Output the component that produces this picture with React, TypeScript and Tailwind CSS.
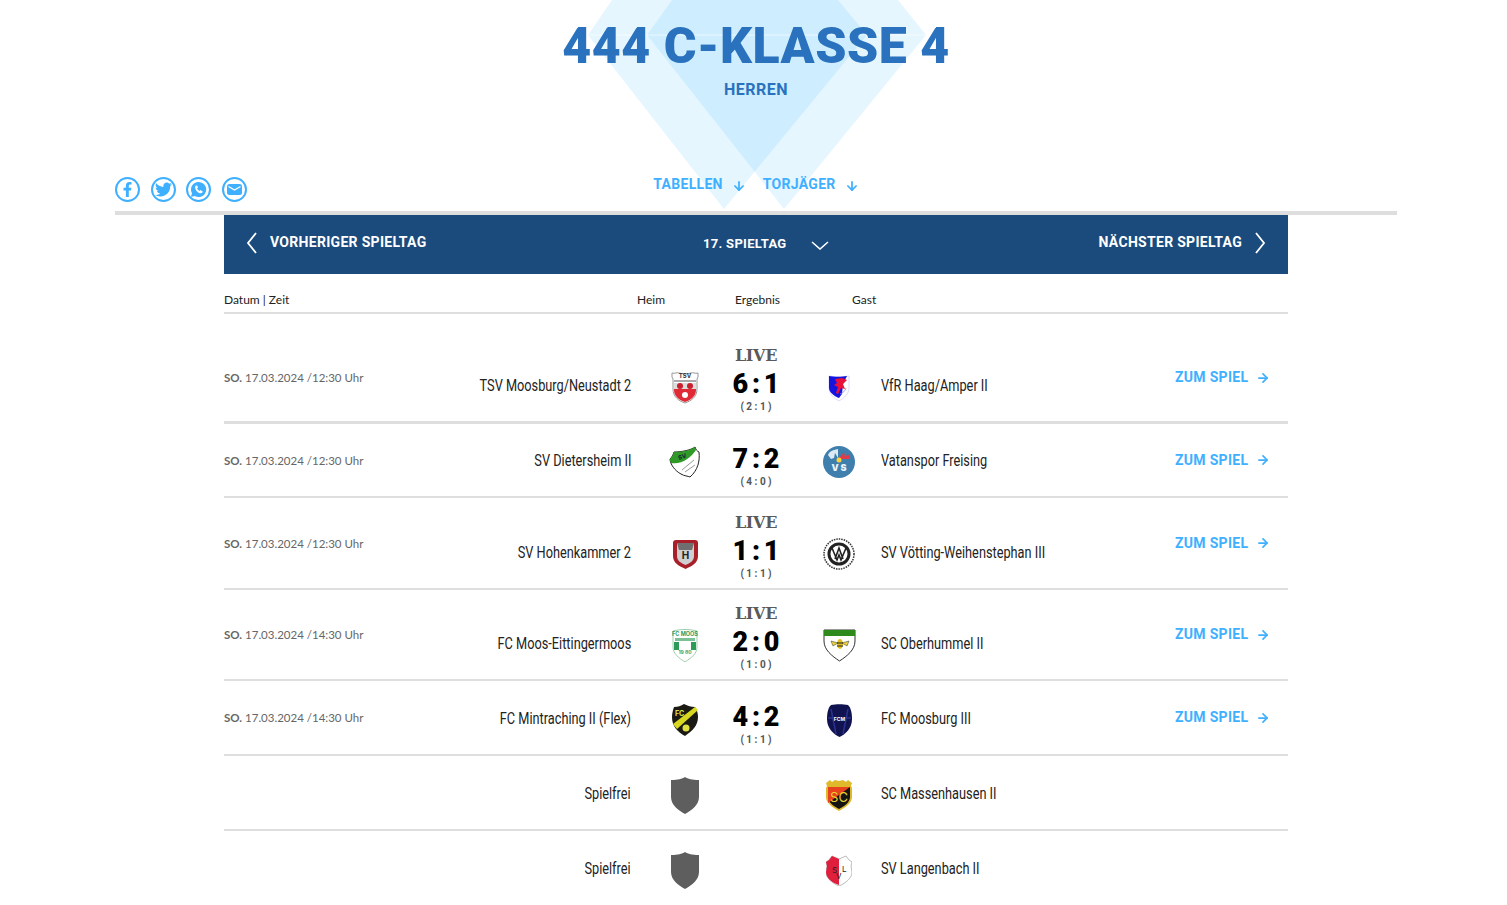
import { ArrowDown, ArrowRight } from "lucide-react";
import { FaFacebookF, FaTwitter } from "react-icons/fa";
import type { ReactNode } from "react";

const block = "font-['Roboto',sans-serif] font-black";

const Shield = () => (
  <svg width="28" height="37" viewBox="0 0 28 37">
    <path d="M14 0c3 2 7 3 14 3v17c0 8-7 13-14 17C7 33 0 28 0 20V3c7 0 11-1 14-3z" fill="#5e5e5e" />
  </svg>
);

const TsvMoosburg = () => (
  <svg width="28" height="33" viewBox="0 0 28 33">
    <path d="M1 2c3 1 5-1 7 0 4 1 8 1 12 0 2-1 4 1 7 0v4l-1 2v10c0 8-6 12-12 14C8 30 2 26 2 18V8L1 6z" fill="#fff" stroke="#999" />
    <text x="14" y="7" textAnchor="middle" fontSize="6" fontWeight="700" fontFamily="Inter, sans-serif" fill="#333">TSV</text>
    <rect x="3" y="9" width="22" height="2" fill="#aaa" />
    <path d="M3 12h22v7c0 6-5 10-11 12C8 29 3 25 3 19z" fill="#e02a36" />
    <rect x="3" y="12" width="22" height="6" fill="#ddd" />
    <circle cx="9" cy="15" r="3" fill="#c8202c" />
    <circle cx="19" cy="15" r="3" fill="#c8202c" />
    <circle cx="14" cy="24" r="3" fill="#fff" />
  </svg>
);

const VfrHaag = () => (
  <svg width="22" height="27" viewBox="0 0 22 27">
    <path d="M1 2c6 1 14 1 20 0v12c0 6-5 10-10 13C6 24 1 20 1 14z" fill="#fff" stroke="#c5c5ee" strokeWidth="0.6" />
    <path d="M1 2c5 1 13 1 18 0l-4 8-1 10-3 4C6 22 1 18 1 14z" fill="#1414e0" />
    <path d="M7 5l7-1 5 2-4 4 2 5-4-1-3 6-2-1 2-6-4-2 3-2z" fill="#e8103a" />
    <path d="M12 20c3-1 5-3 6-6" stroke="#8a8ae0" fill="none" strokeWidth="0.8" />
  </svg>
);

const Dietersheim = () => (
  <svg width="32" height="32" viewBox="0 0 32 32">
    <path d="M5 6c8 0 17-2 21-5 1 3 2 4 4 5 1 9-1 18-9 25-2-1-6-1-9-3C6 25 1 18 1 13c2-2 3-4 4-7z" fill="#fff" stroke="#222" />
    <path d="M5 6c8 0 17-2 21-5l1 3C22 12 12 19 2 17c-1-2-1-3-1-4 2-2 3-4 4-7z" fill="#2f9a28" />
    <text x="10" y="14" fontSize="6" fontWeight="700" fontFamily="Inter, sans-serif" fill="#123" transform="rotate(-20 10 14)">SV</text>
    <path d="M13 24l12-10M16 26l10-7" stroke="#999" strokeWidth="1" />
  </svg>
);

const Vatanspor = () => (
  <svg width="32" height="32" viewBox="0 0 32 32">
    <circle cx="16" cy="16" r="16" fill="#3f7fad" />
    <path d="M5 9l3 4 3-1 1-5 3 5V3C9 4 6 6 5 9z" fill="#dbeaf3" />
    <path d="M17 3v8l4-5 1 5 3-3 2 4-1 1-9 0z" fill="#e23b48" />
    <circle cx="16" cy="14" r="2.5" fill="#ffd23a" />
    <text x="16" y="25" textAnchor="middle" fontSize="9" fontWeight="900" fontFamily="Inter, sans-serif" fill="#e8f2f8">V S</text>
  </svg>
);

const Hohenkammer = () => (
  <svg width="25" height="30" viewBox="0 0 25 30">
    <path d="M3 1h19c2 0 3 1 3 3v13c0 7-6 10-12.500 13C6 27 0 24 0 17V4c0-2 1-3 3-3z" fill="#a81f2a" />
    <path d="M4 4h17v13c0 5-4 7-8.500 9C8 24 4 22 4 17z" fill="#cfcfcf" />
    <path d="M4 4h17l-2 7H6z" fill="#6f6f6f" />
    <text x="12.500" y="20" textAnchor="middle" fontSize="10" fontWeight="700" fontFamily="Inter, sans-serif" fill="#222">H</text>
  </svg>
);

const Voetting = () => (
  <svg width="32" height="32" viewBox="0 0 32 32">
    <circle cx="16" cy="16" r="15" fill="#fff" stroke="#333" strokeWidth="1.500" strokeDasharray="1.500 1" />
    <circle cx="16" cy="16" r="10" fill="#fff" stroke="#222" strokeWidth="3" />
    <path d="M9 10l5 12 2-5 2 5 5-12M12 21l4-11 4 11" stroke="#222" strokeWidth="1.600" fill="none" />
  </svg>
);

const FcMoos = () => (
  <svg width="26" height="33" viewBox="0 0 26 33">
    <path d="M1 2c8-2 16-2 24 0v16c0 7-6 11-12 15C7 29 1 25 1 18z" fill="#fff" stroke="#9ecfae" />
    <text x="13" y="7" textAnchor="middle" fontSize="5.500" fontWeight="700" fontFamily="Inter, sans-serif" fill="#2e9a58">FC MOOS</text>
    <rect x="3" y="9" width="20" height="3" fill="#7cc196" />
    <rect x="2" y="13" width="5" height="8" fill="#2e9a58" />
    <rect x="19" y="13" width="5" height="8" fill="#2e9a58" />
    <text x="13" y="25" textAnchor="middle" fontSize="5" fontWeight="700" fontFamily="Inter, sans-serif" fill="#3aa566">19 80</text>
  </svg>
);

const Oberhummel = () => (
  <svg width="33" height="33" viewBox="0 0 33 33">
    <path d="M1 1h31v11c0 9-8 15-15.500 20C9 27 1 21 1 12z" fill="#fff" stroke="#333" />
    <rect x="1" y="1" width="31" height="6" fill="#2f8a1e" />
    <ellipse cx="17" cy="15" rx="3" ry="5" fill="#e0c020" />
    <path d="M8 12l7 2-5 3zM26 12l-7 2 5 3z" fill="#e8d23a" stroke="#333" strokeWidth="0.500" />
    <path d="M14 14h6M14 17h6" stroke="#222" />
  </svg>
);

const Mintraching = () => (
  <svg width="28" height="32" viewBox="0 0 28 32">
    <path d="M3 3c4 0 7-1 10-3 4 2 7 3 11 3 2 3 3 6 3 10 0 9-6 14-13 19C7 28 1 23 1 13c0-4 1-7 2-10z" fill="#1a1a12" />
    <path d="M2 20L24 3l3 3L6 25z" fill="#d8d820" />
    <text x="4" y="12" fontSize="7" fontWeight="700" fontFamily="Inter, sans-serif" fill="#e0e040">FC</text>
    <circle cx="15" cy="24" r="3.500" fill="#e0e040" />
  </svg>
);

const FcMoosburg = () => (
  <svg width="25" height="33" viewBox="0 0 25 33">
    <path d="M4 1c5-1 12-1 17 0 3 3 4 8 4 14 0 9-6 15-12.500 18C6 30 0 24 0 15 0 9 1 4 4 1z" fill="#10134f" />
    <path d="M4 5l5 25M21 5l-5 25M1 14h23" stroke="#2a3290" strokeWidth="1.500" />
    <circle cx="12.500" cy="15" r="6" fill="#10134f" />
    <text x="12.500" y="17" textAnchor="middle" fontSize="5" fontWeight="700" fontFamily="Inter, sans-serif" fill="#fff">FCM</text>
  </svg>
);

const Massenhausen = () => (
  <svg width="28" height="32" viewBox="0 0 28 32">
    <path d="M1 4l4-3 2 2 3-2 4 1 4-1 3 2 2-2 4 3-1 3 1 2v9c0 6-6 10-13 14C7 28 1 24 1 18V9l1-2z" fill="#e0b92a" />
    <path d="M3 8h22v10c0 5-5 9-11 12C8 27 3 23 3 18z" fill="#141414" />
    <path d="M3 8h22L3 24z" fill="#e8431c" />
    <text x="14" y="23" textAnchor="middle" fontSize="13" fontFamily="Inter, sans-serif" fill="#e8d030">SC</text>
  </svg>
);

const Langenbach = () => (
  <svg width="26" height="31" viewBox="0 0 26 31">
    <path d="M6 1l7 3 7-3 3 4 3 2-1 4 1 6c0 6-6 11-13 14C6 28 0 23 0 17l1-6-1-4 3-2z" fill="#fff" stroke="#bbb" />
    <path d="M6 1l7 3v26C6 28 0 23 0 17l1-6-1-4 3-2z" fill="#e01f3d" />
    <text x="6" y="18" fontSize="8" fontFamily="Inter, sans-serif" fill="#222">S</text>
    <text x="10" y="24" fontSize="8" fontFamily="Inter, sans-serif" fill="#222">V</text>
    <text x="16" y="17" fontSize="8" fontFamily="Inter, sans-serif" fill="#222">L</text>
  </svg>
);

type Match = {
  row: string;
  home: string;
  away: string;
  homeCrest: ReactNode;
  awayCrest: ReactNode;
  time?: string;
  live?: boolean;
  score?: string;
  half?: string;
};

const matches: Match[] = [
  { row: "h-[90px] mt-5 border-b-[3px]", time: "12:30", home: "TSV Moosburg/Neustadt 2", away: "VfR Haag/Amper II", homeCrest: <TsvMoosburg />, awayCrest: <VfrHaag />, live: true, score: "6 : 1", half: "( 2 : 1 )" },
  { row: "h-[74px] border-b-2", time: "12:30", home: "SV Dietersheim II", away: "Vatanspor Freising", homeCrest: <Dietersheim />, awayCrest: <Vatanspor />, score: "7 : 2", half: "( 4 : 0 )" },
  { row: "h-[92px] border-b-2", time: "12:30", home: "SV Hohenkammer 2", away: "SV Vötting-Weihenstephan III", homeCrest: <Hohenkammer />, awayCrest: <Voetting />, live: true, score: "1 : 1", half: "( 1 : 1 )" },
  { row: "h-[91px] border-b-2", time: "14:30", home: "FC Moos-Eittingermoos", away: "SC Oberhummel II", homeCrest: <FcMoos />, awayCrest: <Oberhummel />, live: true, score: "2 : 0", half: "( 1 : 0 )" },
  { row: "h-[75px] border-b-2", time: "14:30", home: "FC Mintraching II (Flex)", away: "FC Moosburg III", homeCrest: <Mintraching />, awayCrest: <FcMoosburg />, score: "4 : 2", half: "( 1 : 1 )" },
  { row: "h-[75px] border-b-2", home: "Spielfrei", away: "SC Massenhausen II", homeCrest: <Shield />, awayCrest: <Massenhausen /> },
  { row: "h-[73px]", home: "Spielfrei", away: "SV Langenbach II", homeCrest: <Shield />, awayCrest: <Langenbach /> },
];

const social = [
  <FaFacebookF key="f" size={15} />,
  <FaTwitter key="t" size={17} />,
  <svg key="w" width="17" height="17" viewBox="0 0 18 18">
    <path d="M9 1a8 8 0 0 0-6.900 12L1 17l4.100-1.100A8 8 0 1 0 9 1z" fill="#3fb0ff" />
    <path d="M6 5c-1 1-1 3 1 5.500s4.500 3 6 2l.5-1.500-2.500-1.500-1 1c-1-.5-2-1.500-2.500-2.500l1-1L7.500 4.500z" fill="#fff" />
  </svg>,
  <svg key="m" width="15" height="11" viewBox="0 0 15 11">
    <rect width="15" height="11" rx="2.500" fill="#3fb0ff" />
    <path d="M1.500 2.500l6 3.500 6-3.500" stroke="#fff" strokeWidth="1.300" fill="none" />
  </svg>,
];

function MatchRow({ m }: { m: Match }) {
  return (
    <div className={`flex items-center border-[#dedede] ${m.row}`}>
      <div className="w-[200px] shrink-0 mt-[1px] text-[11.500px] text-[#666] font-['Lato',sans-serif]">
        {m.time && (
          <>
            <b>SO.</b> 17.03.2024 /{m.time} Uhr
          </>
        )}
      </div>
      <div className="w-[207px] shrink-0 self-end mb-[26px] text-right text-[17px] leading-5 text-[#222] font-['Roboto',sans-serif]">
        <span className="inline-block origin-right scale-x-[0.75] whitespace-nowrap">{m.home}</span>
      </div>
      <div className="ml-[28px] w-[52px] h-[40px] shrink-0 self-end mb-[14px] flex items-center justify-center">
        {m.homeCrest}
      </div>
      <div className="w-[90px] shrink-0 self-end pb-[8px] flex flex-col items-center">
        {m.live && (
          <div className="mb-[5px] text-[16px] leading-4 font-bold tracking-[-0.3px] text-[#5a5a5a] font-['DejaVu_Serif',serif]">
            LIVE
          </div>
        )}
        {m.score && (
          <>
            <div className={`h-[30px] leading-[30px] text-[27px] [word-spacing:-3px] text-black whitespace-nowrap ${block}`}>
              {m.score}
            </div>
            <div className="h-[12px] leading-[12px] mt-[2px] text-[10px] font-bold text-[#555] font-['Roboto',sans-serif] whitespace-nowrap">
              {m.half}
            </div>
          </>
        )}
      </div>
      <div className="w-[76px] h-[40px] shrink-0 self-end mb-[14px] flex items-center justify-center">
        {m.awayCrest}
      </div>
      <div className="pl-1 flex-1 self-end mb-[26px] text-[17px] leading-5 text-[#222] font-['Roboto',sans-serif]">
        <span className="inline-block origin-left scale-x-[0.75] whitespace-nowrap">{m.away}</span>
      </div>
      {m.score && (
        <div className="w-[113px] shrink-0 flex items-center text-[#3fb0ff]">
          <span className="w-[81px] text-[14px] font-bold font-['Roboto',sans-serif] tracking-[0.3px]">ZUM SPIEL</span>
          <ArrowRight size={14} strokeWidth={3} />
        </div>
      )}
    </div>
  );
}

export default function App() {
  return (
    <div className="h-[905px] overflow-hidden bg-white">
      <div className="ml-[115px] w-[1282px]">
        <header className="relative h-[211px] flex flex-col items-center">
          <svg className="absolute left-[473px] top-0" width="338" height="210" viewBox="0 0 338 210">
            <path d="M24 0h226l29 35L136 209 0 35z" fill="#38b6ff" fillOpacity="0.13" />
            <path d="M84 0h226l28 35-142 174L59 35z" fill="#38b6ff" fillOpacity="0.13" />
            <path d="M0 35h338" stroke="#fff" strokeOpacity="0.6" />
          </svg>
          <h1 className={`relative mt-[15px] text-[50px] leading-[62px] tracking-[0.5px] text-[#2a72bd] ${block}`}>
            444 C-KLASSE 4
          </h1>
          <div className="relative mt-[3px] text-[16px] leading-5 font-bold tracking-[0.5px] text-[#2a72bd] font-['Roboto',sans-serif]">
            HERREN
          </div>
          <div className="relative mt-auto mb-[9px] w-full grid grid-cols-[1fr_auto_1fr] items-center">
            <div className="flex gap-[10.500px]">
              {social.map((icon, i) => (
                <span
                  key={i}
                  className="w-[25px] h-[25px] rounded-full border-2 border-[#3fb0ff] text-[#3fb0ff] flex items-center justify-center"
                >
                  {icon}
                </span>
              ))}
            </div>
            <div className="self-start -mt-[3px] flex items-center text-[14px] font-bold tracking-[0.3px] text-[#3fb0ff] font-['Roboto',sans-serif]">
              <span>TABELLEN</span>
              <ArrowDown size={14} strokeWidth={3} className="ml-[9px] mr-[17px] mt-[2px]" />
              <span>TORJÄGER</span>
              <ArrowDown size={14} strokeWidth={3} className="ml-[9px] mt-[2px]" />
            </div>
            <div />
          </div>
        </header>
        <div className="h-1 bg-[#dedede]" />
        <main className="mx-[109px] w-[1064px]">
          <div className="h-[59px] pb-[4px] bg-[#1a4b7c] text-white flex items-center pl-[22px] pr-[22px] text-[14px] font-bold tracking-[0.3px] font-['Roboto',sans-serif]">
            <div className="w-[457px] flex items-center gap-[13px]">
              <svg width="11" height="22" viewBox="0 0 11 22" fill="none" stroke="#fff" strokeWidth="1.800">
                <path d="M10 1L2 11l8 10" />
              </svg>
              <span>VORHERIGER SPIELTAG</span>
            </div>
            <div className="flex items-center gap-[25px] mt-[3px] text-[13px]">
              <span>17. SPIELTAG</span>
              <svg width="18" height="9" viewBox="0 0 18 9" fill="none" stroke="#fff" strokeWidth="1.600" className="mt-[2px]">
                <path d="M1 1l8 7 8-7" />
              </svg>
            </div>
            <div className="ml-auto flex items-center gap-[13px]">
              <span>NÄCHSTER SPIELTAG</span>
              <svg width="11" height="22" viewBox="0 0 11 22" fill="none" stroke="#fff" strokeWidth="1.800">
                <path d="M1 1l8 10-8 10" />
              </svg>
            </div>
          </div>
          <div className="h-[40px] border-b-2 border-[#dedede] flex items-end pb-[4px] text-[12px] leading-4 text-[#222] font-['Lato',sans-serif]">
            <span className="w-[413px]">Datum | Zeit</span>
            <span className="w-[98px]">Heim</span>
            <span className="w-[117px]">Ergebnis</span>
            <span>Gast</span>
          </div>
          {matches.map((m) => (
            <MatchRow key={m.home + m.away} m={m} />
          ))}
        </main>
      </div>
    </div>
  );
}
